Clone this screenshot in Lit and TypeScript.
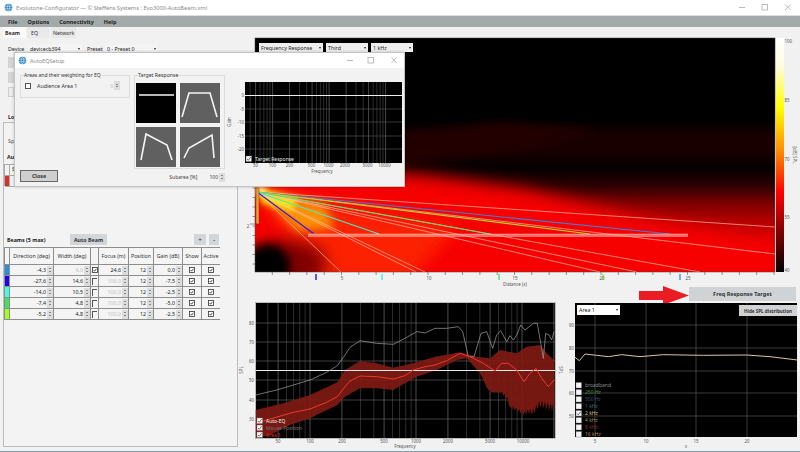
import { LitElement, html, svg, css } from "lit";
import { customElement } from "lit/decorators.js";

type P = [number, number];
const poly = (p: P[]) => p.map((q) => q.join(",")).join(" ");

const GLOBE = svg`<circle cx="5" cy="5" r="4.2" fill="#2f86c8"/><path d="M1 3.6h8M1 6.4h8M5 .8c-2 2.4-2 6 0 8.4M5 .8c2 2.4 2 6 0 8.4" stroke="#cfe6f6" stroke-width=".7" fill="none"/>`;

const CHECK = (x: number, y: number, s: number, on = true) => svg`
  <rect x=${x} y=${y} width=${s} height=${s} fill="#f4f4f4" stroke="#777" stroke-width=".4"/>
  ${on ? svg`<path d="M${x + s * 0.2} ${y + s * 0.55}l${s * 0.22} ${s * 0.22} ${s * 0.42} -${s * 0.55}" fill="none" stroke="#333" stroke-width=".7"/>` : ""}`;

const TICKBOX = html`<svg width="6" height="6" viewBox="0 0 6 6"><rect x=".5" y=".5" width="5" height="5" fill="#fff" stroke="#333" stroke-width=".8"/><path d="M1.6 3l1 1.2 1.9-2.4" fill="none" stroke="#222" stroke-width=".8"/></svg>`;

const logGrid = (x0: number, dec: number, from: number, to: number) => {
  const out: { x: number; major: boolean }[] = [];
  for (const base of [10, 100, 1000, 10000]) {
    for (let m = 1; m < 10; m++) {
      const f = base * m;
      const x = x0 + dec * Math.log10(f / 100);
      if (x > from && x < to) out.push({ x, major: m === 1 || m === 2 || m === 5 });
    }
  }
  return out;
};

const HEAT_STOPS = [
  [0, "#000"], [0.35, "#000"], [0.415, "#180000"], [0.48, "#1a0000"], [0.555, "#040000"],
  [0.63, "#2c0000"], [0.71, "#800000"], [0.8, "#c00000"], [0.885, "#e80000"], [1, "#e60000"],
] as [number, string][];

const BEAMS: [number, number, string][] = [
  [670, 234, "#4a78d8"], [590, 234, "#b4d820"], [490, 234, "#5adc70"], [379, 234, "#48e8c8"], [314, 234, "#3018ee"],
];
const RAYS: P[] = [[775, 227], [775, 254], [700, 272], [637, 272], [600, 272], [425, 272], [416, 272], [341, 272]];
const MARKS: [number, string][] = [[316, "#2010f0"], [382, "#40f0d8"], [499, "#50e070"], [603, "#a8f030"], [680, "#3c94e8"]];

const Z = (p: P[]) => p.map(([x, y]) => [250 + x / 3, 295 + y / 3] as P);
const GRAY = Z([[17,300],[80,285],[130,270],[180,255],[230,232],[262,212],[285,180],[300,157],[330,137],[380,145],[430,148],[465,130],[500,110],[525,114],[555,100],[590,100],[625,95],[638,110],[655,185],[672,185],[693,115],[710,110],[728,160],[740,120],[752,107],[770,140],[780,122],[790,135],[800,120],[812,90],[825,105],[850,85],[862,85],[880,190],[887,115],[897,120],[905,135],[912,110]]);
const REDLINE = Z([[17,385],[60,372],[130,352],[180,342],[230,322],[262,305],[285,275],[300,258],[330,243],[380,245],[430,252],[465,242],[490,225],[525,215],[555,210],[590,197],[630,175],[660,185],[700,205],[735,228],[755,205],[775,205],[800,225],[822,260],[840,235],[858,220],[875,250],[895,275],[912,255]]);

// lower edge of the measured band: a smooth envelope with the fine comb of the high frequencies
const JAG_BASE: P[] = [[912,350],[900,350],[885,345],[870,340],[850,345],[822,365],[805,345],[780,345],[772,310],[750,295],[728,290],[708,280]];
const jagged = () => {
  const out: P[] = [];
  for (let i = 0; i < JAG_BASE.length - 1; i++) {
    const [x0, y0] = JAG_BASE[i];
    const [x1, y1] = JAG_BASE[i + 1];
    const n = Math.max(1, Math.round((x0 - x1) / 3));
    for (let k = 0; k < n; k++) {
      const t = k / n;
      const x = x0 + (x1 - x0) * t;
      const amp = (x - 690) * 0.07;
      const d = (Math.sin(x * 2.1) + Math.sin(x * 0.73)) * amp;
      out.push([x, y0 + (y1 - y0) * t + d]);
    }
  }
  return out;
};
const BAND = Z([[17,345],[100,325],[180,300],[262,262],[285,225],[330,198],[380,205],[430,218],[490,205],[555,185],[630,172],[680,185],[720,190],[750,165],[800,175],[830,155],[870,150],[890,175],[912,195],[915,428],...jagged(),[698,250],[690,235],[650,190],[620,195],[560,225],[500,245],[465,265],[430,285],[380,280],[330,280],[285,305],[262,330],[180,370],[120,390],[60,420],[17,430]]);
const AREA: P[] = ([[15,232],[28,242],[45,222],[80,226],[115,230],[155,224],[210,230],[280,224],[400,226],[530,225],[600,230],[682,240]] as P[]).map(([x, y]) => [570 + x / 3, 280 + y / 3] as P);

const THUMBS: { bg: string; pts: P[] }[] = [
  { bg: "#000", pts: [[3, 12], [38, 12]] },
  { bg: "#606060", pts: [[2, 34], [9, 10], [30, 10], [37, 34]] },
  { bg: "#606060", pts: [[5, 33], [10, 7], [31, 18], [36, 33]] },
  { bg: "#606060", pts: [[4, 31], [9, 21], [32, 8], [34, 31]] },
];

const ROWS = [
  { c: "#2d8be0", d: "-4,3", w: "4,0", wd: true, ck: true, f: "24,6", fd: false, g: "0,0" },
  { c: "#2000f0", d: "-27,6", w: "14,6", wd: false, ck: false, f: "100,0", fd: true, g: "-7,5" },
  { c: "#40ffe0", d: "-14,0", w: "10,5", wd: false, ck: false, f: "100,0", fd: true, g: "-2,5" },
  { c: "#40e060", d: "-7,4", w: "4,8", wd: false, ck: false, f: "100,0", fd: true, g: "-5,0" },
  { c: "#a0ff20", d: "-5,2", w: "4,8", wd: false, ck: false, f: "100,0", fd: true, g: "-2,5" },
];
const HEADS = ["", "Direction (deg)", "Width (deg)", "", "Focus (m)", "Position", "Gain (dB)", "Show", "Active"];
const LEGEND: [string, string, boolean][] = [
  ["broadband", "#8a8a8a", false], ["250 Hz", "#3a9a50", false], ["500 Hz", "#34507a", false], ["1 kHz", "#3f6f80", false],
  ["2 kHz", "#d8c090", true], ["4 kHz", "#9a9440", false], ["8 kHz", "#8a2a2a", false], ["16 kHz", "#a88a50", false],
];

@customElement("app-root")
export class AppRoot extends LitElement {
  static styles = css`
    :host { display: block; width: 800px; height: 452px; position: relative; overflow: hidden; background: #f1f1f1;
      font-family: "Noto Sans", "Liberation Sans", sans-serif; font-size: 5.3px; color: #222; }
    * { box-sizing: border-box; }
    svg { display: block; }
    .app { display: flex; flex-direction: column; height: 452px; border-bottom: 1px solid #7f9cb8; }
    .title { height: 15px; flex: none; background: #fff; display: flex; align-items: center; padding: 0 0 0 4px; color: #8a8a8a; font-size: 5.7px; gap: 3px; }
    .title .grow { flex: 1; }
    .menu { height: 12px; flex: none; background: #a4aaaa; display: flex; align-items: center; padding-left: 8px; gap: 10px; font-size: 5.5px; font-weight: 700; color: #222; border-top: 1px solid #ddd; }
    .body { flex: 1; display: flex; min-height: 0; }
    .left { width: 238px; flex: none; }
    .right { flex: 1; display: flex; flex-direction: column; position: relative; }
    .tabs { display: flex; height: 11px; padding-left: 3px; gap: 1px; }
    .tab { padding: 0 2px; display: flex; align-items: center; background: #e9e9e9; color: #333; }
    .tab.on { background: #fafafa; width: 23px; font-weight: 700; }
    .tab.eq { width: 22px; padding-left: 4px; } .tab.net { width: 25px; margin-left: 1px; }
    .row { display: flex; align-items: center; height: 10px; margin-top: 6px; padding-left: 8px; }
    .combo { background: #f4f4f4; height: 10px; padding: 0 2px; display: flex; align-items: center; justify-content: space-between; color: #222; font-size: 5.3px; }
    .combo::after { content: ""; border: 1.6px solid transparent; border-top: 2.2px solid #222; border-bottom: 0; }
    .l-dev { width: 20px; } .l-pre { width: 18px; margin-left: 5px; }
    .c-dev { width: 54px; } .c-pre { width: 53px; }
    .stack { display: flex; flex-direction: column; gap: 4px; padding-left: 8px; margin-top: 3px; }
    .sq { width: 6px; height: 11px; background: #d2d4d6; }
    .sq.lt { background: #ececec; border: 1px solid #d0d0d0; height: 10px; }
    .head { font-weight: 700; height: 8px; line-height: 8px; margin: 16px 0 1px 8px; }
    .box { margin-left: 3px; width: 235px; height: 325px; border: 1px solid #bcbcbc; background: #f3f3f3; display: flex; flex-direction: column; }
    .sp { margin: 14px 0 0 4px; height: 8px; line-height: 8px; color: #444; }
    .au { margin: 8px 0 0 3px; height: 8px; line-height: 8px; font-weight: 700; }
    .small { margin-top: 3px; width: 60px; height: 22px; border-top: 1px solid #aaa; border-left: 1px solid #aaa; display: grid; grid-template-rows: 11px 11px; }
    .small div { border-bottom: 1px solid #aaa; display: flex; }
    .small i { width: 5px; border-right: 1px solid #aaa; display: block; }
    .small .r i { background: #d8302a; }
    .small span { padding-left: 2px; }
    .bh { display: flex; align-items: center; height: 11px; margin-top: 48px; padding-left: 3px; font-size: 5.3px; }
    .bh b { width: 63px; }
    .btn { background: #d3d6d9; height: 11px; display: flex; align-items: center; justify-content: center; font-weight: 700; color: #333; font-size: 5.3px; }
    .b-auto { width: 37px; } .b-plus { width: 12px; margin-left: 87px; } .b-minus { width: 10px; margin-left: 3px; }
    .grid { margin-top: 2px; width: 216px; background: #8e8e8e; padding: 1px; display: grid; gap: 1px;
      grid-template-columns: 4px 43px 36px 7px 29px 24px 28px 18px 18px; grid-template-rows: 16px repeat(5, 10px); font-size: 5.3px; }
    .grid > div { background: #f4f4f4; display: flex; align-items: center; }
    .hc { justify-content: center; color: #333; white-space: nowrap; overflow: hidden; }
    .num { justify-content: flex-end; color: #222; }
    .dim { color: #c2c2c2; }
    .spin { width: 6px; height: 9px; margin-left: 1px; background: #dcdcdc; display: flex; flex-direction: column; align-items: center; justify-content: center; gap: 1.4px; flex: none; }
    .spin::before { content: ""; border: 1.2px solid transparent; border-bottom: 1.5px solid #333; border-top: 0; }
    .spin::after { content: ""; border: 1.2px solid transparent; border-top: 1.5px solid #333; border-bottom: 0; }
    .cc { justify-content: center; }
    .gridbox { width: 5px; height: 7px; border-left: 1px solid #555; border-top: 1px solid #555; }
    .cb { width: 6px; height: 6px; border: .8px solid #555; background: #fff; }
    .act { display: flex; height: 14px; flex: none; justify-content: flex-end; padding-right: 4px; }
    .act .freq { width: 107px; height: 14px; background: #cfd3d6; font-size: 5.5px; }
    .act svg { overflow: visible; }
    .charts { display: flex; }
    .controls { position: absolute; top: 16px; left: 21px; display: flex; gap: 3px; }
    .controls .combo { height: 9px; background: #eee; }
    .cf { width: 64px; } .ct { width: 42px; } .ck { width: 42px; }
    .holder { position: relative; }
    .over { position: absolute; display: flex; }
    .area1 { left: 13px; top: 4px; }
    .area1 .combo { width: 43px; height: 10px; background: #fff; }
    .hide { right: 3px; top: 4px; width: 58px; height: 11px; }
    .hide .btn { width: 58px; background: #d0d2d4; font-size: 4.6px; }
    .dialog { position: absolute; left: 14px; top: 52px; width: 391px; height: 135px; background: #f2f2f2; border: 1px solid #c4c4c4; box-shadow: 0 0 3px rgba(0,0,0,.2); display: flex; flex-direction: column; z-index: 2; }
    .dtitle { height: 15px; flex: none; background: #fff; display: flex; align-items: center; padding-left: 3px; gap: 3px; color: #8a8a8a; font-size: 5.5px; }
    .dtitle .grow { flex: 1; }
    .dbody { flex: 1; display: flex; padding: 7px 0 0 5px; }
    .dleft { width: 110px; display: flex; flex-direction: column; }
    .group { border: 1px solid #dcdcdc; }
    .gt { display: block; width: fit-content; margin: -4px 0 0 3px; background: #f2f2f2; height: 7px; line-height: 7px; padding-right: 1px; font-size: 5px; color: #333; }
    .gt.w { font-size: 5.2px; }
    .g1 { height: 23px; }
    .aud { display: flex; align-items: center; padding: 2px 0 0 4px; gap: 6px; color: #333; }
    .aud .v { margin-left: 27px; color: #bbb; display: flex; align-items: center; }
    .close { margin-top: 72px; width: 38px; height: 12px; background: #d0d0d0; border: 1px solid #666; font-weight: 700; color: #333; display: flex; align-items: center; justify-content: center; }
    .dmid { margin-left: 4px; width: 91px; }
    .g2 { height: 94px; }
    .thumbs { display: grid; grid-template-columns: 40px 40px; gap: 4px; padding: 4px 0 0 1px; }
    .sub { display: flex; align-items: center; justify-content: flex-end; height: 10px; margin-top: 3px; font-size: 5px; gap: 12px; color: #444; }
    .sub span.v { display: flex; align-items: center; }
    .t { font-family: "Noto Sans", "Liberation Sans", sans-serif; font-size: 4.4px; fill: #555; }
    .tw { fill: #e8e8e8; font-size: 5px; }
    .lg { font-size: 5px; }
  `;

  private heat() {
    const ticksB: number[] = [];
    for (let x = 272.3; x < 775; x += 17.3) ticksB.push(x);
    const ticksL: number[] = [];
    for (let y = 55; y < 272; y += 9.5) ticksL.push(y);
    return svg`
      <defs>
        <linearGradient id="hg" x1="0" y1="0" x2="0" y2="1">
          ${HEAT_STOPS.map(([o, c]) => svg`<stop offset=${o} stop-color=${c}/>`)}
        </linearGradient>
        <linearGradient id="cb" x1="0" y1="0" x2="0" y2="1">
          <stop offset="0" stop-color="#fff"/><stop offset=".12" stop-color="#fffbe0"/><stop offset=".3" stop-color="#ffff00"/>
          <stop offset=".5" stop-color="#ff8000"/><stop offset=".66" stop-color="#ff0000"/><stop offset=".85" stop-color="#700000"/><stop offset="1" stop-color="#000"/>
        </linearGradient>
        <filter id="b3" x="-30%" y="-30%" width="160%" height="160%"><feGaussianBlur stdDeviation="3"/></filter>
        <filter id="b5" x="-30%" y="-30%" width="160%" height="160%"><feGaussianBlur stdDeviation="5"/></filter>
        <filter id="b8" x="-30%" y="-50%" width="160%" height="200%"><feGaussianBlur stdDeviation="8"/></filter>
        <clipPath id="plot"><rect x="255" y="38" width="520" height="234"/></clipPath>
      </defs>
      <rect x="255" y="38" width="520" height="234" fill="url(#hg)"/>
      <g clip-path="url(#plot)">
        <polygon points="380,138 500,122 600,130 520,150 380,165" fill="#240000" filter="url(#b5)"/>
        <polygon points="240,168 420,174 520,188 640,217 775,245 800,290 240,290" fill="#f60000" filter="url(#b8)"/>
        <polygon points="257,190 460,226 400,290 320,290" fill="#ff3000" fill-opacity=".7" filter="url(#b8)"/>
        <polygon points="257,190 325,205 335,228 298,232" fill="#ff9000" filter="url(#b5)"/>
        <polygon points="257,188 298,199 292,211 262,203" fill="#ffe800" filter="url(#b3)"/>
        <ellipse cx="260" cy="191" rx="7" ry="4" fill="#ffffb0" filter="url(#b3)"/>
        <ellipse cx="285" cy="264" rx="42" ry="24" fill="#800000" filter="url(#b8)"/>
        <ellipse cx="268" cy="266" rx="22" ry="22" fill="#000" filter="url(#b5)"/>
        ${RAYS.map(([x, y]) => svg`<line x1="257" y1="192" x2=${x} y2=${y} stroke="#ffc8b8" stroke-opacity=".72" stroke-width=".9"/>`)}
        ${BEAMS.map(([x, y, c]) => svg`<line x1="257" y1="192" x2=${x} y2=${y} stroke=${c} stroke-width="1.2"/>`)}
        <rect x="308" y="234" width="380" height="2.4" fill="#ffb0a0" fill-opacity=".45"/>
        <path d="M308 234.2H688M308 236.2H688" stroke="#ffe0d8" stroke-opacity=".85" stroke-width=".7"/>
      </g>
      <rect x="256" y="188" width="3" height="36" fill="#f09a30" stroke="#5a3a10" stroke-width=".4"/>
      <path d="M250 224H258" stroke="#333" stroke-width=".5"/>
      <rect x="255" y="38" width="520" height="234" fill="none" stroke="#444" stroke-width=".5"/>
      ${ticksL.map((y) => svg`<line x1="252.5" y1=${y} x2="255" y2=${y} stroke="#333" stroke-width=".5"/>`)}
      ${ticksB.map((x) => svg`<line x1=${x} y1="272" x2=${x} y2="275" stroke="#333" stroke-width=".5"/>`)}
      ${MARKS.map(([x, c]) => svg`<rect x=${x - 0.7} y="274" width="1.4" height="6" fill=${c}/>`)}
      <text class="t" x="248" y="227.5" text-anchor="middle">2</text>
      ${[[342, "5"], [429, "10"], [515, "15"], [602, "20"], [688, "25"]].map(([x, s]) => svg`<text class="t" x=${x} y="280" text-anchor="middle">${s}</text>`)}
      <text class="t" x="515" y="286" text-anchor="middle">Distance (x)</text>
      <rect x="776" y="38" width="8" height="234" fill="url(#cb)"/>
      ${[[43, "100"], [102, "85"], [161, "70"], [219, "55"], [272, "40"]].map(([y, s]) => svg`<text class="t" x="784.5" y=${y}>${s}</text>`)}
      <text class="t" transform="translate(793 155) rotate(90)" text-anchor="middle">[dB] SPL</text>`;
  }

  private spl() {
    const grid = logGrid(310, 106, 256, 555);
    return svg`
      <rect x="256" y="303" width="299" height="135" fill="#000"/>
      ${grid.map((g) => svg`<line x1=${g.x} y1="303" x2=${g.x} y2="438" stroke=${g.major ? "#808080" : "#4c4c4c"} stroke-width=".6"/>`)}
      ${[323, 342, 361, 380, 400, 419].map((y) => svg`<line x1="256" y1=${y} x2="555" y2=${y} stroke="#6a6a6a" stroke-width=".6"/>`)}
      <polygon points=${poly(BAND)} fill="#7e1a12" fill-opacity=".92"/>
      <line x1="256" y1="370.5" x2="555" y2="370.5" stroke="#eee" stroke-width="1"/>
      <polyline points=${poly(GRAY)} fill="none" stroke="#a0a0a0" stroke-width=".7"/>
      <polyline points=${poly(REDLINE)} fill="none" stroke="#f03830" stroke-width="1"/>
      <rect x="255.7" y="302.7" width="299.6" height="135.6" fill="none" stroke="#888" stroke-width=".5"/>
      ${[[323, "80"], [342, "70"], [361, "60"], [380, "50"], [400, "40"], [419, "30"]].map(([y, s]) => svg`<text class="t" x="254" y=${(y as number) + 2} text-anchor="end">${s}</text>`)}
      <text class="t" transform="translate(243 370) rotate(-90)" text-anchor="middle">SPL</text>
      <text class="t" transform="translate(559 370) rotate(90)" text-anchor="middle">SPL</text>
      ${[[278, "50"], [310, "100"], [342, "200"], [384, "500"], [416, "1000"], [448, "2000"], [490, "5000"], [523, "10000"]].map(([x, s]) => svg`<text class="t" x=${x} y="442.5" text-anchor="middle">${s}</text>`)}
      <text class="t" x="405" y="448" text-anchor="middle">Frequency</text>
      ${CHECK(257, 418, 5.5)}${CHECK(257, 425, 5.5)}${CHECK(257, 432, 5.5)}
      <text class="t lg" x="266" y="422.5" style="fill:#eee">Auto-EQ</text>
      <text class="t lg" x="266" y="429.5" style="fill:#777">Mouse Position</text>
      <text class="t lg" x="266" y="436.5" style="fill:#e02820">Area 1</text>`;
  }

  private area() {
    return svg`
      <rect x="575" y="303" width="222" height="134" fill="#000"/>
      ${[325, 348, 371, 393, 416].map((y) => svg`<line x1="575" y1=${y} x2="797" y2=${y} stroke="#555" stroke-width=".7"/>`)}
      ${[595, 646, 696, 747].map((x) => svg`<line x1=${x} y1="303" x2=${x} y2="437" stroke="#555" stroke-width=".7"/>`)}
      <polyline points=${poly(AREA)} fill="none" stroke="#dcc69c" stroke-width="1"/>
      ${[[325, "90"], [348, "80"], [371, "70"], [393, "60"], [416, "50"]].map(([y, s]) => svg`<text class="t" x="574" y=${(y as number) + 2} text-anchor="end">${s}</text>`)}
      ${[[595, "5"], [646, "10"], [696, "15"], [747, "20"]].map(([x, s]) => svg`<text class="t" x=${x} y="442.5" text-anchor="middle">${s}</text>`)}
      <text class="t" x="686" y="448" text-anchor="middle">x</text>
      ${LEGEND.map(([s, c, on], i) => svg`${CHECK(576, 382.5 + i * 7, 5.5, on)}<text class="t lg" x="585" y=${387 + i * 7} style="fill:${c}">${s}</text>`)}`;
  }

  private gain() {
    const grid = logGrid(273.6, 56.5, 246, 403);
    return svg`
      <rect x="246" y="82" width="157" height="81" fill="#000"/>
      ${grid.map((g) => svg`<line x1=${g.x} y1="82" x2=${g.x} y2="163" stroke=${g.major ? "#777" : "#4a4a4a"} stroke-width=".6"/>`)}
      ${[109, 122, 136, 149].map((y) => svg`<line x1="246" y1=${y} x2="403" y2=${y} stroke="#5a5a5a" stroke-width=".6"/>`)}
      <line x1="246" y1="95.5" x2="403" y2="95.5" stroke="#eee" stroke-width="1"/>
      ${[[95, "0"], [109, "-5"], [122, "-10"], [136, "-15"], [149, "-20"]].map(([y, s]) => svg`<text class="t" x="245" y=${(y as number) + 2} text-anchor="end">${s}</text>`)}
      <text class="t" transform="translate(232 122) rotate(-90)" text-anchor="middle">Gain</text>
      ${[[256.6, "50"], [273.6, "100"], [290.6, "200"], [312.6, "500"], [329.6, "1000"], [346, "2000"], [368.6, "5000"], [385.6, "10000"]].map(([x, s]) => svg`<text class="t" x=${x} y="167" text-anchor="middle">${s}</text>`)}
      <text class="t" x="323" y="172.5" text-anchor="middle">Frequency</text>
      ${CHECK(247, 156, 5.5)}
      <text class="t tw" x="256" y="161">Target Response</text>`;
  }

  render() {
    return html`
      <div class="app">
        <div class="title">
          <svg width="9" height="9" viewBox="0 0 10 10">${GLOBE}</svg>
          <span class="grow">Evolutone-Configurator — © Steffens Systems : Evo3000-AutoBeam.xml</span>
          <svg width="52" height="7" viewBox="0 0 52 7" fill="none" stroke="#a0a0a0" stroke-width=".7" style="margin-right:9px">
            <path d="M0 3.5H6"/><rect x="23" y=".5" width="5.5" height="5.5"/><path d="M46 .5l5.5 5.5M51.5 .5L46 6"/>
          </svg>
        </div>
        <div class="menu"><span>File</span><span>Options</span><span>Connectivity</span><span>Help</span></div>
        <div class="body">
          <div class="left">
            <div class="tabs"><div class="tab on">Beam</div><div class="tab eq">EQ</div><div class="tab net">Network</div></div>
            <div class="row"><span class="l-dev">Device</span><div class="combo c-dev">devicecb394</div><span class="l-pre">Preset</span><div class="combo c-pre">0 - Preset 0</div></div>
            <div class="stack"><div class="sq"></div><div class="sq"></div><div class="sq lt"></div></div>
            <div class="head">Loudspeaker</div>
            <div class="box">
              <div class="sp">Speaker</div>
              <div class="au">Audience</div>
              <div class="small"><div><i></i><span>S</span></div><div class="r"><i></i><span></span></div></div>
              <div class="bh"><b>Beams (5 max)</b><div class="btn b-auto">Auto Beam</div><div class="btn b-plus">+</div><div class="btn b-minus">-</div></div>
              <div class="grid">
                ${HEADS.map((h) => html`<div class="hc">${h}</div>`)}
                ${ROWS.map((r) => html`
                  <div style="background:${r.c}"></div>
                  <div class="num">${r.d}<span class="spin"></span></div>
                  <div class="num ${r.wd ? "dim" : ""}">${r.w}<span class="spin"></span></div>
                  <div class="cc">${r.ck ? TICKBOX : html`<span class="gridbox"></span>`}</div>
                  <div class="num ${r.fd ? "dim" : ""}">${r.f}<span class="spin"></span></div>
                  <div class="num">12<span class="spin"></span></div>
                  <div class="num">${r.g}<span class="spin"></span></div>
                  <div class="cc">${TICKBOX}</div>
                  <div class="cc">${TICKBOX}</div>`)}
              </div>
            </div>
          </div>
          <div class="right">
            <svg width="562" height="260" viewBox="238 27 562 260">${this.heat()}</svg>
            <div class="controls">
              <div class="combo cf">Frequency Response</div><div class="combo ct">Third</div><div class="combo ck">1 kHz</div>
            </div>
            <div class="act">
              <svg width="50" height="14" viewBox="639 287 50 14"><polygon points="639,291 663,291 663,286 689,295.5 663,305 663,300 639,300" fill="#ec1c24"/></svg>
              <div class="btn freq">Freq Response Target</div>
            </div>
            <div class="charts">
              <svg width="326" height="150" viewBox="238 301 326 150">${this.spl()}</svg>
              <div class="holder">
                <svg width="236" height="150" viewBox="564 301 236 150">${this.area()}</svg>
                <div class="over area1"><div class="combo">Area 1</div></div>
                <div class="over hide"><div class="btn">Hide SPL distribution</div></div>
              </div>
            </div>
          </div>
        </div>
      </div>
      <div class="dialog">
        <div class="dtitle">
          <svg width="9" height="9" viewBox="0 0 10 10">${GLOBE}</svg>
          <span class="grow">AutoEQSetup</span>
          <svg width="50" height="7" viewBox="0 0 50 7" fill="none" stroke="#a0a0a0" stroke-width=".7" style="margin-right:7px">
            <path d="M0 3.5H6"/><rect x="21" y=".5" width="5.5" height="5.5"/><path d="M44.5 .5l5 5.5M49.5 .5l-5 5.5"/>
          </svg>
        </div>
        <div class="dbody">
          <div class="dleft">
            <div class="group g1">
              <span class="gt">Areas and their weighting for EQ</span>
              <div class="aud"><span class="cb"></span><span>Audience Area 1</span><span class="v">0<span class="spin"></span></span></div>
            </div>
            <div class="close">Close</div>
          </div>
          <div class="dmid">
            <div class="group g2">
              <span class="gt w">Target Response</span>
              <div class="thumbs">
                ${THUMBS.map((t) => html`<svg width="40" height="40" viewBox="0 0 40 40" style="background:${t.bg}"><polyline points=${poly(t.pts)} fill="none" stroke="#f4f4f4" stroke-width="1.6"/></svg>`)}
              </div>
            </div>
            <div class="sub"><span>Subarea [%]</span><span class="v">100<span class="spin"></span></span></div>
          </div>
          <svg width="179" height="118" viewBox="226 68 179 118" style="margin-top:-7px">${this.gain()}</svg>
        </div>
      </div>`;
  }
}
